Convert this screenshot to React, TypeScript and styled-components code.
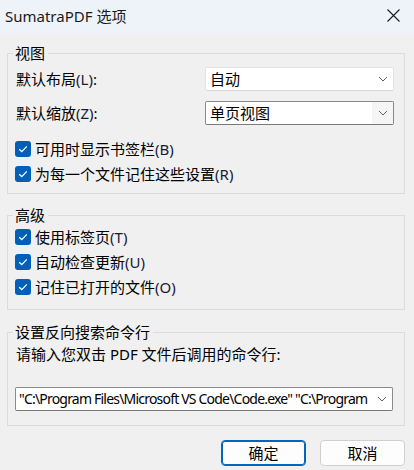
import React from "react";
import styled, { createGlobalStyle } from "styled-components";

const Global = createGlobalStyle`
  html, body { margin: 0; padding: 0; background: #f0f0f0; }
  body {
    width: 414px; height: 470px; overflow: hidden;
    font-family: "Segoe UI", "Noto Sans", "Noto Sans CJK SC", sans-serif;
    font-size: 15px; color: #000;
  }
  * { box-sizing: border-box; }
`;

const Window = styled.div`
  width: 414px;
  height: 470px;
  display: flex;
  flex-direction: column;
  background: #f0f0f0;
`;

const TitleBar = styled.div`
  height: 33px;
  flex: none;
  background: #eef2f9;
  display: flex;
  align-items: center;
  justify-content: space-between;
  padding: 0 14px 0 5px;
`;

const Title = styled.span`
  font-size: 15px;
  line-height: 20px;
  color: #1b1b1b;
  margin-top: -1px;
`;

const Close = styled.button`
  width: 14px;
  height: 14px;
  padding: 0;
  border: 0;
  background: transparent;
  display: flex;
  align-items: center;
  justify-content: center;
  margin-top: -2px;
`;

const Body = styled.div`
  flex: 1;
  display: flex;
  flex-direction: column;
  padding: 11px 9px 0 7px;
`;

const Group = styled.fieldset<{ $mt?: number; $pt?: number; $pb?: number }>`
  margin: ${(p) => p.$mt ?? 0}px 0 0 0;
  border: 1px solid #dcdcdc;
  padding: ${(p) => p.$pt ?? 0}px 10px ${(p) => p.$pb ?? 0}px 8px;
  min-width: 0;
  display: flex;
  flex-direction: column;
`;

const Legend = styled.legend`
  padding: 0 3px 0 2px;
  margin-left: -3px;
  line-height: 18px;
  height: 18px;
  font-size: 15px;
`;

const FieldRow = styled.div<{ $mb?: number }>`
  display: flex;
  align-items: center;
  justify-content: space-between;
  height: 24px;
  margin-bottom: ${(p) => p.$mb ?? 0}px;
`;

const Label = styled.span`
  line-height: 20px;
  white-space: nowrap;
`;

const Select = styled.div<{ $active?: boolean; $width?: number }>`
  width: ${(p) => p.$width ?? 189}px;
  height: 24px;
  background: #fff;
  border: 1px solid ${(p) => (p.$active ? "#8a8a8a" : "#e3e3e3")};
  border-bottom-color: ${(p) => (p.$active ? "#7a7a7a" : "#d6d6d6")};
  border-radius: 2px;
  display: flex;
  align-items: stretch;
  overflow: hidden;
`;

const SelectText = styled.span`
  flex: 1;
  padding-left: 4px;
  line-height: 22px;
  white-space: nowrap;
  overflow: hidden;
`;

const PathText = styled(SelectText)`
  font-family: "Noto Sans", sans-serif;
  font-size: 14px;
  letter-spacing: -0.8px;
  padding-left: 3px;
`;

const Arrow = styled.span<{ $active?: boolean }>`
  width: 21px;
  flex: none;
  display: flex;
  align-items: center;
  justify-content: center;
  background: ${(p) => (p.$active ? "#f5f5f5" : "transparent")};
`;

const CheckRow = styled.label`
  display: flex;
  align-items: center;
  height: 25px;
  gap: 4px;
  margin-left: -1px;
`;

const Box = styled.span`
  width: 16px;
  height: 16px;
  border-radius: 3px;
  background: #005fb8;
  display: flex;
  align-items: center;
  justify-content: center;
  flex: none;
`;

const Acc = styled.span`
  color: #1a1a3a;
`;

const InfoRow = styled.div`
  height: 26px;
  display: flex;
  align-items: center;
  line-height: 20px;
`;

const InputBox = styled(Select)`
  margin-top: 20px;
  border-color: #8a8a8a;
  border-bottom-color: #7a7a7a;
  margin-left: -1px;
`;

const Buttons = styled.div`
  display: flex;
  justify-content: flex-end;
  gap: 14px;
  margin-top: 14px;
`;

const Button = styled.button<{ $primary?: boolean }>`
  width: 85px;
  height: 26px;
  border-radius: 4px;
  background: #fdfdfd;
  border: 1px solid ${(p) => (p.$primary ? "#0067c0" : "#d0d0d0")};
  box-shadow: ${(p) => (p.$primary ? "inset 0 0 0 1px #0067c0" : "none")};
  font-family: inherit;
  font-size: 15px;
  color: #000;
  padding: 0;
  line-height: 22px;
`;

const Chevron = () => (
  <svg width="10" height="6" viewBox="0 0 10 6">
    <path d="M1 1 L5 5 L9 1" fill="none" stroke="#606060" strokeWidth="1" />
  </svg>
);

const Check = () => (
  <svg width="10" height="8" viewBox="0 0 10 8">
    <path d="M1.2 4.2 L3.8 6.6 L8.8 1.4" fill="none" stroke="#fff" strokeWidth="1.3" />
  </svg>
);

const CheckItem = ({ text, acc }: { text: string; acc: string }) => (
  <CheckRow>
    <Box>
      <Check />
    </Box>
    <Label>
      {text}
      <Acc>({acc})</Acc>
    </Label>
  </CheckRow>
);

export default function App() {
  return (
    <Window>
      <Global />
      <TitleBar>
        <Title>SumatraPDF 选项</Title>
        <Close aria-label="close">
          <svg width="13" height="13" viewBox="0 0 13 13">
            <path d="M0.5 0.5 L12.5 12.5 M12.5 0.5 L0.5 12.5" stroke="#1a1a1a" strokeWidth="1.1" />
          </svg>
        </Close>
      </TitleBar>
      <Body>
        <Group $pt={5} $pb={7}>
          <Legend>视图</Legend>
          <FieldRow $mb={10}>
            <Label>
              默认布局<Acc>(L)</Acc>:
            </Label>
            <Select>
              <SelectText>自动</SelectText>
              <Arrow>
                <Chevron />
              </Arrow>
            </Select>
          </FieldRow>
          <FieldRow $mb={11}>
            <Label>
              默认缩放<Acc>(Z)</Acc>:
            </Label>
            <Select $active>
              <SelectText>单页视图</SelectText>
              <Arrow $active>
                <Chevron />
              </Arrow>
            </Select>
          </FieldRow>
          <CheckItem text="可用时显示书签栏" acc="B" />
          <CheckItem text="为每一个文件记住这些设置" acc="R" />
        </Group>
        <Group $mt={12} $pt={0} $pb={10}>
          <Legend>高级</Legend>
          <CheckItem text="使用标签页" acc="T" />
          <CheckItem text="自动检查更新" acc="U" />
          <CheckItem text="记住已打开的文件" acc="O" />
        </Group>
        <Group $mt={13} $pt={0} $pb={14}>
          <Legend>设置反向搜索命令行</Legend>
          <InfoRow>请输入您双击 PDF 文件后调用的命令行:</InfoRow>
          <InputBox $width={378}>
            <PathText>"C:\Program Files\Microsoft VS Code\Code.exe" "C:\Program</PathText>
            <Arrow>
              <Chevron />
            </Arrow>
          </InputBox>
        </Group>
        <Buttons>
          <Button $primary>确定</Button>
          <Button>取消</Button>
        </Buttons>
      </Body>
    </Window>
  );
}
